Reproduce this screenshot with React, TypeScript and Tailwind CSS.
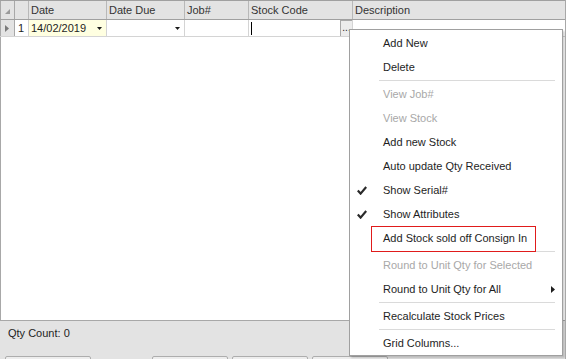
import React from "react";

type Item =
  | { kind: "sep" }
  | {
      kind: "item";
      label: string;
      disabled?: boolean;
      checked?: boolean;
      submenu?: boolean;
      boxed?: boolean;
    };

const menuItems: Item[] = [
  { kind: "item", label: "Add New" },
  { kind: "item", label: "Delete" },
  { kind: "sep" },
  { kind: "item", label: "View Job#", disabled: true },
  { kind: "item", label: "View Stock", disabled: true },
  { kind: "item", label: "Add new Stock" },
  { kind: "item", label: "Auto update Qty Received" },
  { kind: "item", label: "Show Serial#", checked: true },
  { kind: "item", label: "Show Attributes", checked: true },
  { kind: "item", label: "Add Stock sold off Consign In", boxed: true },
  { kind: "sep" },
  { kind: "item", label: "Round to Unit Qty for Selected", disabled: true },
  { kind: "item", label: "Round to Unit Qty for All", submenu: true },
  { kind: "sep" },
  { kind: "item", label: "Recalculate Stock Prices" },
  { kind: "sep" },
  { kind: "item", label: "Grid Columns..." },
];

function DropArrow() {
  return (
    <svg width="5" height="3" viewBox="0 0 5 3" className="shrink-0">
      <path d="M0 0H5L2.5 3Z" fill="#1a1a1a" />
    </svg>
  );
}

function Check() {
  return (
    <svg width="10" height="9" viewBox="0 0 10 9">
      <path
        d="M0.8 4.6L3.6 7.6L9.2 1"
        fill="none"
        stroke="#2a2a2a"
        strokeWidth="2.2"
      />
    </svg>
  );
}

function ContextMenu() {
  return (
    <div className="absolute left-[349px] top-[29px] w-[214px] border border-[#a0a0a0] bg-white pt-[1px] shadow-[2px_2px_2px_rgba(0,0,0,0.18)]">
      {menuItems.map((it, i) =>
        it.kind === "sep" ? (
          <div key={i} className="h-[3px] flex items-center ml-[29px] mr-[7px]">
            <div className="h-px w-full bg-[#dadada]" />
          </div>
        ) : (
          <div
            key={i}
            className={`relative h-[24px] flex items-center ${
              it.disabled ? "text-[#a8a8a8]" : "text-[#1e1e1e]"
            }`}
          >
            <div className="w-[33px] h-full flex items-center pl-[7px] shrink-0">
              {it.checked && <Check />}
            </div>
            <span className="whitespace-nowrap">{it.label}</span>
            {it.submenu && (
              <svg width="4" height="7" viewBox="0 0 4 7" className="ml-auto mr-[7px]">
                <path d="M0 0L4 3.5L0 7Z" fill="#1e1e1e" />
              </svg>
            )}
            {it.boxed && (
              <div className="absolute left-[21px] top-0 w-[165px] h-[26px] border border-[#e01b1b]" />
            )}
          </div>
        )
      )}
    </div>
  );
}

export default function App() {
  return (
    <div className="relative w-[566px] h-[359px] overflow-hidden bg-white flex flex-col border-r border-[#a8a8a8] font-['Liberation_Sans',Arial,sans-serif] text-[11px] text-[#1e1e1e]">
      {/* header */}
      <div className="flex h-[20px] shrink-0 border-t border-b border-[#a0a0a0] bg-[#e3e3e3] text-[#333]">
        <div className="w-[15px] border-r border-l border-[#a8a8a8] flex items-end justify-end pr-[4px] pb-[5px]">
          <svg width="5" height="5" viewBox="0 0 5 5">
            <path d="M5 0V5H0Z" fill="#9a9a9a" />
          </svg>
        </div>
        <div className="w-[14px] border-r border-[#b8b8b8]" />
        <div className="w-[78px] border-r border-[#b8b8b8] flex items-center pl-[2px]">Date</div>
        <div className="w-[78px] border-r border-[#b8b8b8] flex items-center pl-[2px]">Date Due</div>
        <div className="w-[64px] border-r border-[#b8b8b8] flex items-center pl-[2px]">Job#</div>
        <div className="w-[104px] border-r border-[#b8b8b8] flex items-center pl-[2px]">Stock Code</div>
        <div className="flex-1 flex items-center pl-[2px]">Description</div>
      </div>

      {/* row 1 */}
      <div className="flex h-[17px] shrink-0 border-b border-[#d4d4d4]">
        <div className="w-[15px] border-r border-l border-[#a8a8a8] bg-[#e3e3e3] flex items-center pl-[4px]">
          <svg width="4" height="7" viewBox="0 0 4 7">
            <path d="M0 0L4 3.5L0 7Z" fill="#7a7a7a" />
          </svg>
        </div>
        <div className="w-[14px] border-r border-[#d4d4d4] flex items-center pl-[3px]">1</div>
        <div className="w-[78px] border-r border-[#d4d4d4] bg-[#ffffe1] flex items-center pl-[2px] pr-[4px]">
          <span className="flex-1">14/02/2019</span>
          <DropArrow />
        </div>
        <div className="w-[78px] border-r border-[#d4d4d4] flex items-center justify-end pr-[4px]">
          <DropArrow />
        </div>
        <div className="w-[64px] border-r border-[#d4d4d4]" />
        <div className="w-[104px] border-r border-[#d4d4d4] flex items-stretch pl-[2px]">
          <div className="flex-1 flex items-center">
            <div className="w-px h-[13px] bg-black" />
          </div>
          <div className="w-[12px] bg-[#ececec] border-l border-t border-[#a8a8a8] flex items-center justify-center leading-none text-[10px] pb-[2px]">
            ...
          </div>
        </div>
        <div className="flex-1" />
      </div>

      {/* body */}
      <div className="flex-1 border-l border-[#a8a8a8]" />

      {/* footer */}
      <div className="h-[39px] shrink-0 border-t border-[#a8a8a8] bg-[#e3e3e3] flex flex-col">
        <div className="pl-[8px] pt-[6px] leading-[13px]">Qty Count: 0</div>
        <div className="flex mt-[16px] pl-[5px]">
          <div className="w-[86px] h-[24px] border border-[#adadad] rounded-[2px] bg-[#ededed]" />
          <div className="w-[76px] h-[24px] ml-[61px] border border-[#adadad] rounded-[2px] bg-[#ededed]" />
          <div className="w-[76px] h-[24px] ml-[4px] border border-[#adadad] rounded-[2px] bg-[#ededed]" />
          <div className="w-[76px] h-[24px] ml-[4px] border border-[#adadad] rounded-[2px] bg-[#ededed]" />
        </div>
      </div>

      <ContextMenu />
    </div>
  );
}
